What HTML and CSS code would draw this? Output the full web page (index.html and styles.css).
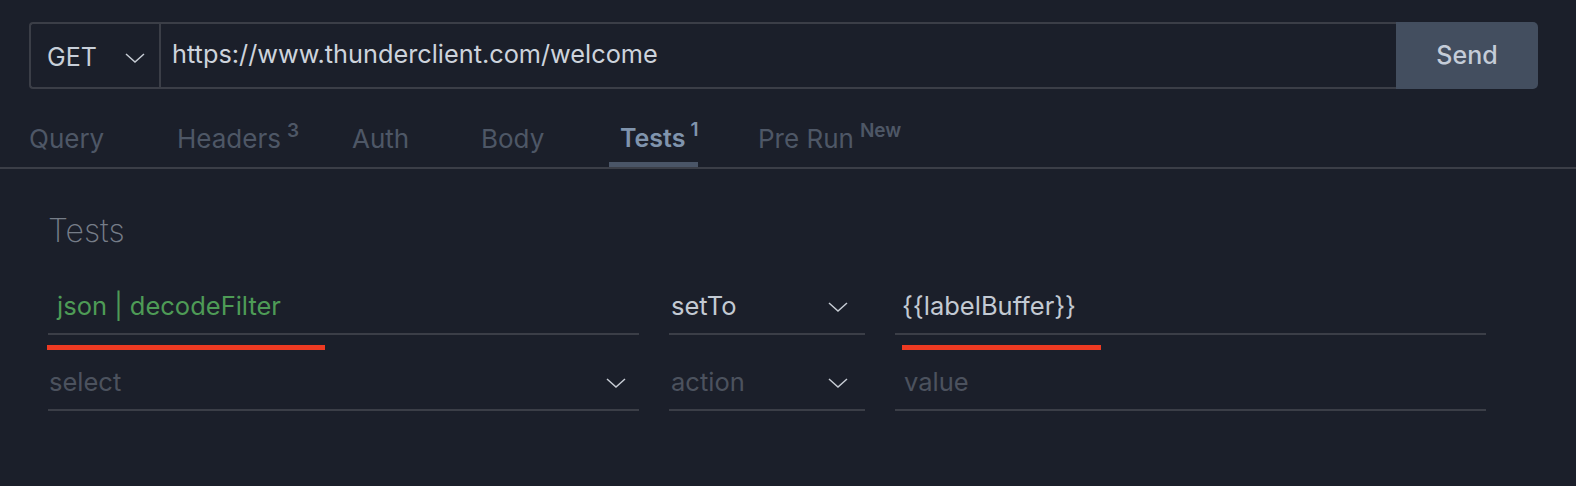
FILE: index.html
```html
<!DOCTYPE html>
<html lang="en">
<head>
<meta charset="utf-8">
<title>Thunder Client – Tests</title>
<link rel="stylesheet" href="styles.css">
</head>
<body>
<div class="request">
  <div class="url-group">
    <div class="method">
      <span class="method-name">GET</span>
      <svg class="chev" viewBox="0 0 20 10" width="20" height="10"><path d="M1 1 L10 9 L19 1" fill="none" stroke="currentColor" stroke-width="1.5"/></svg>
    </div>
    <div class="url">https://www.thunderclient.com/welcome</div>
  </div>
  <div class="send">Send</div>
</div>

<nav class="tabs">
  <div class="tab"><span class="label">Query</span></div>
  <div class="tab"><span class="label">Headers<sup>3</sup></span></div>
  <div class="tab"><span class="label">Auth</span></div>
  <div class="tab"><span class="label">Body</span></div>
  <div class="tab active"><span class="label">Tests<sup>1</sup></span></div>
  <div class="tab"><span class="label">Pre Run<sup>New</sup></span></div>
</nav>

<section class="tests">
  <h2 class="heading">Tests</h2>
  <div class="grid">
    <div class="field first"><span class="green">json | decodeFilter</span><span class="mark mark-a"></span></div>
    <div class="field select mid"><span class="val">setTo</span>
      <svg class="chev" viewBox="0 0 20 10" width="20" height="10"><path d="M1 1 L10 9 L19 1" fill="none" stroke="currentColor" stroke-width="1.5"/></svg></div>
    <div class="field last"><span class="val">{{labelBuffer}}</span><span class="mark mark-b"></span></div>

    <div class="field select first2"><span class="ph">select</span>
      <svg class="chev" viewBox="0 0 20 10" width="20" height="10"><path d="M1 1 L10 9 L19 1" fill="none" stroke="currentColor" stroke-width="1.5"/></svg></div>
    <div class="field select mid"><span class="ph">action</span>
      <svg class="chev" viewBox="0 0 20 10" width="20" height="10"><path d="M1 1 L10 9 L19 1" fill="none" stroke="currentColor" stroke-width="1.5"/></svg></div>
    <div class="field last2"><span class="ph">value</span></div>
  </div>
</section>
</body>
</html>
```
FILE: styles.css
```css
* { box-sizing: border-box; }
html, body {
  margin: 0;
  padding: 0;
  background: #1b1f2a;
  font-family: Inter, "Noto Sans", "Liberation Sans", sans-serif;
  width: 1576px;
  height: 486px;
  overflow: hidden;
}

.request {
  display: flex;
  margin: 22px 38px 0 29px;
  height: 67px;
}
.url-group {
  flex: 1;
  display: flex;
  border: 2px solid #3b3e47;
  border-right: none;
  border-radius: 4px 0 0 4px;
}
.method {
  width: 130px;
  flex: none;
  display: flex;
  align-items: center;
  justify-content: space-between;
  padding: 2px 14px 0 16px;
  border-right: 2px solid #3b3e47;
  color: #c8cfd9;
  font-size: 25px;
}
.method .chev { color: #c7ccd4; margin-top: 2px; }
.url {
  flex: 1;
  display: flex;
  align-items: center;
  padding: 0 0 4px 11px;
  color: #cdd3dc;
  font-size: 25.3px;
}
.send {
  width: 142px;
  flex: none;
  display: flex;
  align-items: center;
  justify-content: center;
  padding-bottom: 2px;
  background: #434e5f;
  border-radius: 0 5px 5px 0;
  color: #c4ccd8;
  font-size: 25px;
  font-weight: 500;
}

.tabs {
  display: grid;
  grid-template-columns: 148px 175px 129px 139px 138px auto;
  align-items: end;
  height: 80px;
  padding-left: 18px;
  border-bottom: 2px solid #3b3e47;
}
.tab { display: flex; }
.label {
  display: inline-block;
  padding: 0 0 9px 11px;
  border-bottom: 5px solid transparent;
  color: #4e5766;
  font-size: 26px;
  line-height: 29px;
  white-space: nowrap;
}
.label sup {
  font-size: 19px;
  font-weight: 600;
  line-height: 0;
  vertical-align: 11px;
  margin-left: 6px;
}
.tab.active .label {
  color: #8094ad;
  font-weight: 600;
  font-size: 25px;
  border-bottom-color: #4a5567;
}
.tab.active .label sup { margin-left: 5px; }

.tests { padding-left: 48px; }
.heading {
  margin: 44px 0 0 0;
  height: 36px;
  font-size: 32px;
  font-weight: 250;
  line-height: 36px;
  color: #767d88;
}
.grid {
  display: grid;
  grid-template-columns: 591px 196px 591px;
  column-gap: 30px;
  row-gap: 26px;
  margin-top: 36px;
}
.field {
  position: relative;
  height: 50px;
  display: flex;
  align-items: flex-start;
  justify-content: space-between;
  padding-top: 6px;
  border-bottom: 2px solid #3b3e47;
  font-size: 25.5px;
  line-height: 30px;
}
.field.first { padding-left: 9px; }
.field.first2 { padding-left: 1px; padding-right: 13px; }
.field.mid { padding-left: 2px; padding-right: 17px; }
.field.last { padding-left: 7px; }
.field.last2 { padding-left: 9px; }
.field .chev { color: #c7ccd4; margin-top: 11px; }
.green { color: #4e9b56; }
.val { color: #c3cad3; }
.ph { color: #4c525e; }

.mark {
  position: absolute;
  top: 60px;
  height: 5px;
  background: #ee3a22;
}
.mark-a { left: -1px; width: 278px; }
.mark-b { left: 7px; width: 199px; }
```
